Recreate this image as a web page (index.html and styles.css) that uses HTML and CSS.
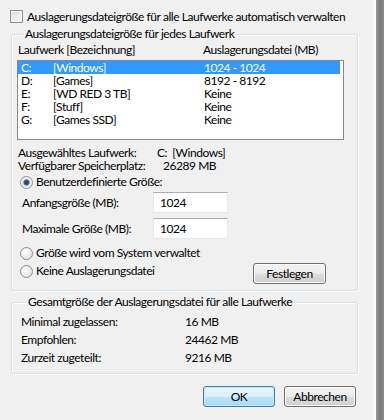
FILE: index.html
```html
<!DOCTYPE html>
<html lang="de">
<head>
    <meta charset="UTF-8">
    <title>Virtueller Arbeitsspeicher</title>
    <link rel="stylesheet" href="styles.css">
</head>
<body>
    <div class="window">
        <div class="dialog">
            <label class="auto-row">
                <span class="check"></span>
                <span>Auslagerungsdateigröße für alle Laufwerke automatisch verwalten</span>
            </label>

            <section class="group group-drives">
                <div class="group-title">Auslagerungsdateigröße für jedes Laufwerk</div>
                <div class="list-head">
                    <span class="col-drive">Laufwerk [Bezeichnung]</span>
                    <span>Auslagerungsdatei (MB)</span>
                </div>
                <ul class="drive-list">
                    <li class="selected"><span class="letter">C:</span><span class="name">[Windows]</span><span>1024 - 1024</span></li>
                    <li><span class="letter">D:</span><span class="name">[Games]</span><span>8192 - 8192</span></li>
                    <li><span class="letter">E:</span><span class="name">[WD RED 3 TB]</span><span>Keine</span></li>
                    <li><span class="letter">F:</span><span class="name">[Stuff]</span><span>Keine</span></li>
                    <li><span class="letter">G:</span><span class="name">[Games SSD]</span><span>Keine</span></li>
                </ul>

                <div class="info-row first">
                    <span class="info-label">Ausgewähltes Laufwerk:</span>
                    <span>C:&nbsp;&nbsp;[Windows]</span>
                </div>
                <div class="info-row">
                    <span class="info-label">Verfügbarer Speicherplatz:</span>
                    <span class="space">26289 MB</span>
                </div>

                <label class="radio-row custom">
                    <span class="radio checked"></span>
                    <span>Benutzerdefinierte Größe:</span>
                </label>
                <div class="size-row">
                    <span class="size-label">Anfangsgröße (MB):</span>
                    <span class="textbox">1024</span>
                </div>
                <div class="size-row second">
                    <span class="size-label">Maximale Größe (MB):</span>
                    <span class="textbox">1024</span>
                </div>
                <label class="radio-row system">
                    <span class="radio"></span>
                    <span>Größe wird vom System verwaltet</span>
                </label>
                <div class="set-row">
                    <label class="radio-row none">
                        <span class="radio"></span>
                        <span>Keine Auslagerungsdatei</span>
                    </label>
                    <button class="btn btn-set">Festlegen</button>
                </div>
            </section>

            <section class="group group-total">
                <div class="group-title">Gesamtgröße der Auslagerungsdatei für alle Laufwerke</div>
                <div class="total-row first"><span class="total-label">Minimal zugelassen:</span><span>16 MB</span></div>
                <div class="total-row"><span class="total-label">Empfohlen:</span><span>24462 MB</span></div>
                <div class="total-row"><span class="total-label">Zurzeit zugeteilt:</span><span>9216 MB</span></div>
            </section>

            <div class="buttons">
                <button class="btn btn-default">OK</button>
                <button class="btn">Abbrechen</button>
            </div>
        </div>
        <div class="frame"></div>
    </div>
</body>
</html>
```

FILE: styles.css
```css
/* Grundlayout */
body {
    margin: 0;
    font-family: Lato, "Open Sans", sans-serif;
    font-size: 12px;
    letter-spacing: -0.45px;
    color: #000;
    background-color: #f0f0f0;
}
.window {
    display: flex;
    width: 384px;
    height: 420px;
    overflow: hidden;
}
.dialog {
    width: 376px;
    box-sizing: border-box;
    padding: 10px 15px 0 11px;
    border-right: 3px solid #f8f8f8;
}
.frame {
    flex: 1;
    background: linear-gradient(to right, #9a9a9a, #7a7a7a 50%, #8c8c8c);
}

/* Checkbox oben */
.auto-row {
    display: flex;
    align-items: center;
    height: 13px;
    line-height: 13px;
    margin-left: -1px;
    white-space: nowrap;
}
.check {
    flex: none;
    width: 11px;
    height: 11px;
    border: 1px solid #8e8f8f;
    background: linear-gradient(135deg, #dcdcdc, #fbfbfb);
    box-shadow: inset 0 0 0 1px #f4f4f4;
    margin-right: 4px;
}

/* Gruppen */
.group {
    border: 1px solid #d5dfe5;
    border-radius: 3px;
    box-shadow: 1px 1px 0 #fff, inset 1px 1px 0 #fff;
}
.group-title {
    display: table;
    margin: -8px 0 0 5px;
    padding: 0 2px;
    line-height: 14px;
    background-color: #f0f0f0;
}
.group-drives {
    margin-top: 11px;
    padding: 0 0 6px 6px;
}
.list-head {
    display: flex;
    margin-top: 2px;
    line-height: 14px;
}
.col-drive {
    width: 185px;
}

/* Laufwerksliste */
.drive-list {
    list-style: none;
    margin: 3px 0 0 -1px;
    padding: 0;
    width: 327px;
    height: 80px;
    box-sizing: border-box;
    border: 1px solid #828790;
    background-color: #fff;
}
.drive-list li {
    display: flex;
    height: 13px;
    line-height: 13px;
    padding-left: 3px;
    margin-right: 3px;
}
.drive-list li.selected {
    background-color: #3399ff;
    color: #fff;
}
.letter {
    width: 32px;
}
.name {
    width: 151px;
}

/* Infozeilen */
.info-row {
    display: flex;
    line-height: 13px;
}
.info-row.first {
    margin-top: 6px;
}
.info-label {
    width: 139px;
}
.space {
    padding-left: 6px;
}

/* Optionsfelder */
.radio-row {
    display: flex;
    align-items: center;
    line-height: 14px;
    height: 14px;
    margin-left: 2px;
}
.radio {
    flex: none;
    width: 11px;
    height: 11px;
    border: 1px solid #8e8f8f;
    border-radius: 50%;
    background: radial-gradient(circle at 40% 35%, #fff, #dadada);
    margin-right: 3px;
}
.radio.checked {
    background: radial-gradient(circle, #203a55 0, #3c5f84 2.5px, #d9e4ef 3.5px, #f4f4f4 5px);
}
.custom {
    margin-top: 3px;
}
.system {
    margin-top: 7px;
}

/* Eingabefelder */
.size-row {
    display: flex;
    align-items: center;
    margin: 3px 0 0 4px;
}
.size-row.second {
    margin-top: 5px;
}
.size-label {
    width: 131px;
}
.textbox {
    width: 75px;
    height: 21px;
    box-sizing: border-box;
    padding-left: 6px;
    line-height: 19px;
    background-color: #fff;
    border: 1px solid #e3e9ef;
    border-top-color: #abadb3;
}

.set-row {
    display: flex;
    justify-content: space-between;
    align-items: flex-start;
    margin-top: 3px;
    padding-right: 31px;
}
.set-row .radio-row {
    margin-top: 1px;
}

/* Buttons */
.btn {
    font-family: inherit;
    font-size: 12px;
    letter-spacing: -0.45px;
    color: #000;
    width: 72px;
    height: 21px;
    padding: 0;
    border: 1px solid #707070;
    border-radius: 3px;
    background: linear-gradient(#f2f2f2, #ebebeb 50%, #dddddd 50%, #cfcfcf);
    box-shadow: inset 0 0 0 1px #fcfcfc;
}
.btn-set {
    width: 73px;
}
.btn-default {
    border-color: #3c7fb1;
    background: linear-gradient(#eaf6fd, #d9f0fc 50%, #bee6fd 50%, #a7d9f5);
    box-shadow: inset 0 0 0 1px #c8e6f8;
}

/* Gesamtgröße */
.group-total {
    margin-top: 11px;
    padding: 0 0 6px 9px;
}
.total-row {
    display: flex;
    line-height: 18px;
}
.total-row.first {
    margin-top: 4px;
}
.total-label {
    width: 164px;
}

.buttons {
    display: flex;
    justify-content: flex-end;
    gap: 9px;
    margin-top: 12px;
    padding-right: 2px;
}
```
